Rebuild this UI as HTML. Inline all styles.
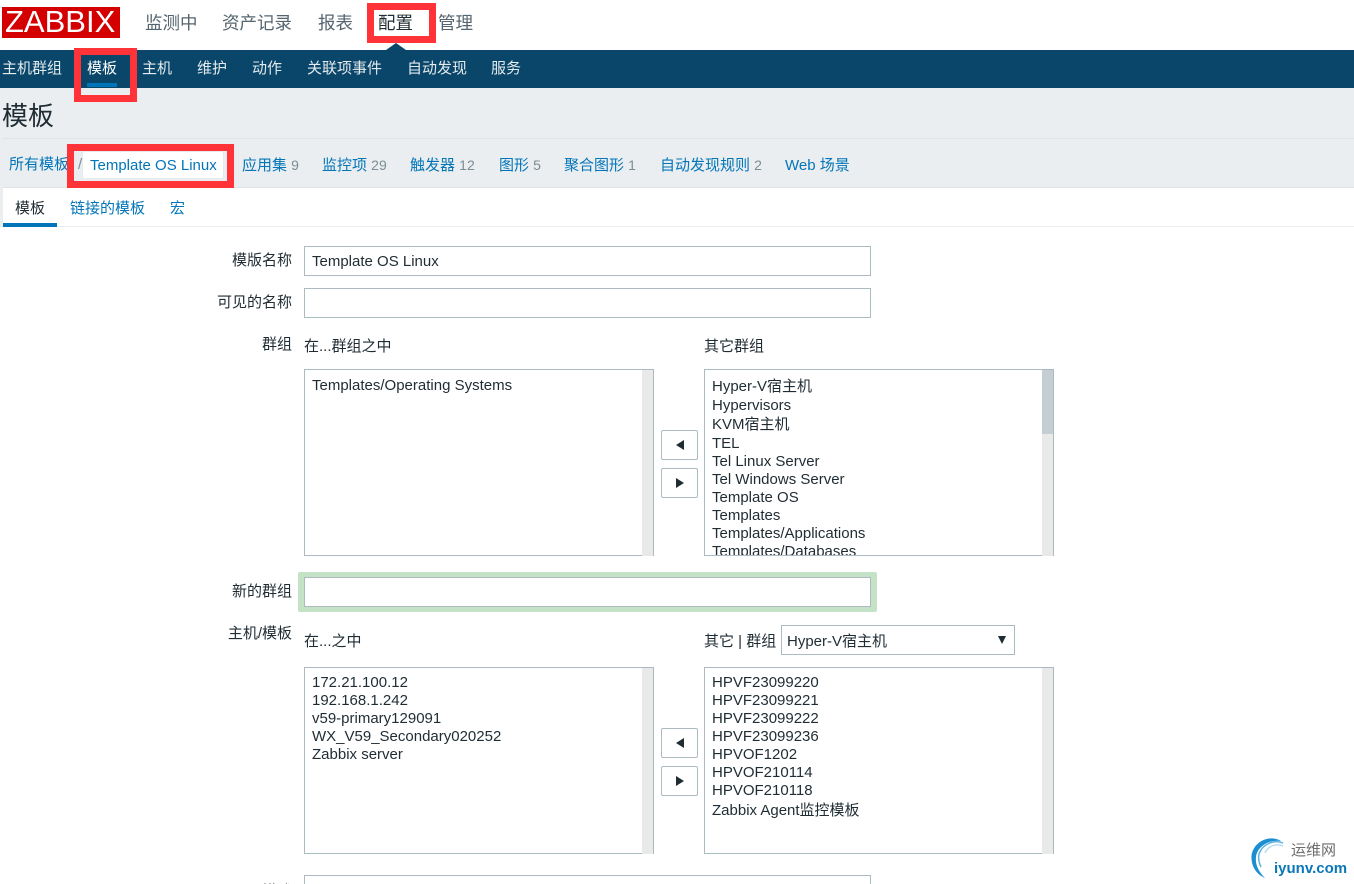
<!DOCTYPE html>
<html lang="zh"><head><meta charset="utf-8"><title>模板</title>
<style>
html,body{margin:0;padding:0;background:#fff}
#p{position:relative;width:1354px;height:884px;overflow:hidden;background:#fff;font:15px/20px "Liberation Sans","Noto Sans CJK SC",sans-serif;color:#1f2c33}
#p div{position:absolute;box-sizing:border-box}
.t{position:absolute;white-space:nowrap;line-height:20px}
.n{color:#e3ebef}.b{color:#0275b8}.g{color:#7c8d96}.r{text-align:right;width:120px;left:172px}
.inp{border:1px solid #acbbc2;background:#fff;left:304px;width:567px;height:30px}
.list{border:1px solid #acbbc2;background:#fff;width:350px;height:187px;overflow:hidden}
#p .sbw{width:350px;height:187px;overflow:visible}
.sb{top:1px;left:338px;width:11px;height:186px;background:#e9e9e9}
.btn{left:661px;width:37px;height:30px;border:1px solid #acbbc2;border-radius:2px;background:#fff}
.red{border:7px solid #ff3338}
</style></head><body><div id="p">
<div style="left:2px;top:7px;width:118px;height:31px;background:#d40000"></div>
<span class="t" style="left:5px;top:6px;line-height:32px;font-size:31px;color:#fff">ZABBIX</span>
<span class="t" style="left:145px;top:13px;font-size:17.5px;color:#55656f">监测中</span>
<span class="t" style="left:222px;top:13px;font-size:17.5px;color:#55656f">资产记录</span>
<span class="t" style="left:318px;top:13px;font-size:17.5px;color:#55656f">报表</span>
<span class="t" style="left:378px;top:13px;font-size:17.5px;color:#1f2c33">配置</span>
<span class="t" style="left:438px;top:13px;font-size:17.5px;color:#55656f">管理</span>
<div style="left:0;top:50px;width:1354px;height:38px;background:#0a466a"></div>
<div style="left:386px;top:43px;width:0;height:0;border-left:10px solid transparent;border-right:10px solid transparent;border-bottom:7px solid #0a466a"></div>
<span class="t n" style="left:2px;top:59px">主机群组</span>
<span class="t" style="left:87px;top:59px;color:#fff">模板</span>
<div style="left:87px;top:83px;width:30px;height:4px;background:#0275b8"></div>
<span class="t n" style="left:142px;top:59px">主机</span>
<span class="t n" style="left:197px;top:59px">维护</span>
<span class="t n" style="left:252px;top:59px">动作</span>
<span class="t n" style="left:307px;top:59px">关联项事件</span>
<span class="t n" style="left:407px;top:59px">自动发现</span>
<span class="t n" style="left:491px;top:59px">服务</span>
<div style="left:0;top:88px;width:1354px;height:99px;background:#ebeef0"></div>
<div style="left:0;top:187px;width:3px;height:40px;background:#ebeef0"></div>
<div style="left:2px;top:138px;width:1352px;height:1px;background:#dfe4e7"></div>
<span class="t" style="left:2px;top:106px;font-size:26px;color:#1f2c33">模板</span>
<span class="t b" style="left:9px;top:155px">所有模板</span>
<span class="t g" style="left:78px;top:155px">/</span>
<div style="left:83px;top:152px;width:140px;height:26px;background:#fff;border-radius:2px;box-shadow:0 0 1px #ccd5d9"></div>
<span class="t b" style="left:90px;top:156px">Template OS Linux</span>
<span class="t b" style="left:242px;top:155px">应用集 <span class="g" style="font-size:14px">9</span></span>
<span class="t b" style="left:322px;top:155px">监控项 <span class="g" style="font-size:14px">29</span></span>
<span class="t b" style="left:410px;top:155px">触发器 <span class="g" style="font-size:14px">12</span></span>
<span class="t b" style="left:499px;top:155px">图形 <span class="g" style="font-size:14px">5</span></span>
<span class="t b" style="left:564px;top:155px">聚合图形 <span class="g" style="font-size:14px">1</span></span>
<span class="t b" style="left:660px;top:155px">自动发现规则 <span class="g" style="font-size:14px">2</span></span>
<span class="t b" style="left:785px;top:156px">Web 场景</span>
<div style="left:3px;top:187px;width:1351px;height:1px;background:#dfe4e7"></div>
<div style="left:3px;top:226px;width:1351px;height:1px;background:#ebeef0"></div>
<div style="left:3px;top:223px;width:54px;height:4px;background:#0275b8"></div>
<span class="t" style="left:15px;top:199px">模板</span>
<span class="t b" style="left:70px;top:199px">链接的模板</span>
<span class="t b" style="left:170px;top:199px">宏</span>
<span class="t r" style="top:251px">模版名称</span>
<div class="inp" style="top:246px"></div>
<span class="t" style="left:312px;top:252px">Template OS Linux</span>
<span class="t r" style="top:293px">可见的名称</span>
<div class="inp" style="top:288px"></div>
<span class="t r" style="top:335px">群组</span>
<span class="t" style="left:304px;top:337px">在...群组之中</span>
<span class="t" style="left:704px;top:337px">其它群组</span>
<div class="list" style="left:304px;top:369px"></div>
<div class="sb" style="left:642px;top:370px"></div>
<span class="t" style="left:312px;top:376px">Templates/Operating Systems</span>
<div class="list" style="left:704px;top:369px">
<span class="t" style="left:7px;top:7px">Hyper-V宿主机</span>
<span class="t" style="left:7px;top:26px">Hypervisors</span>
<span class="t" style="left:7px;top:45px">KVM宿主机</span>
<span class="t" style="left:7px;top:64px">TEL</span>
<span class="t" style="left:7px;top:82px">Tel Linux Server</span>
<span class="t" style="left:7px;top:100px">Tel Windows Server</span>
<span class="t" style="left:7px;top:118px">Template OS</span>
<span class="t" style="left:7px;top:136px">Templates</span>
<span class="t" style="left:7px;top:154px">Templates/Applications</span>
<span class="t" style="left:7px;top:172px">Templates/Databases</span>
</div>
<div class="sb" style="left:1042px;top:370px"></div>
<div style="left:1042px;top:370px;width:11px;height:64px;background:#c5ced4"></div>
<div class="btn" style="top:430px"><div style="left:14px;top:9px;width:0;height:0;border-top:5px solid transparent;border-bottom:5px solid transparent;border-right:8px solid #1f2c33"></div></div>
<div class="btn" style="top:468px"><div style="left:14px;top:9px;width:0;height:0;border-top:5px solid transparent;border-bottom:5px solid transparent;border-left:8px solid #1f2c33"></div></div>
<span class="t r" style="top:582px">新的群组</span>
<div style="left:298px;top:572px;width:579px;height:40px;background:#c4e2c6;border-radius:2px"></div>
<div class="inp" style="top:577px"></div>
<span class="t r" style="top:624px">主机/模板</span>
<span class="t" style="left:304px;top:632px">在...之中</span>
<span class="t" style="left:704px;top:632px">其它 | 群组</span>
<div style="left:781px;top:625px;width:234px;height:30px;border:1px solid #acbbc2;background:#fff"></div>
<span class="t" style="left:787px;top:632px">Hyper-V宿主机</span>
<div style="left:998px;top:636px;width:0;height:0;border-left:4.5px solid transparent;border-right:4.5px solid transparent;border-top:8px solid #1f2c33"></div>
<div class="list" style="left:304px;top:667px">
<span class="t" style="left:7px;top:5px">172.21.100.12</span>
<span class="t" style="left:7px;top:23px">192.168.1.242</span>
<span class="t" style="left:7px;top:41px">v59-primary129091</span>
<span class="t" style="left:7px;top:59px">WX_V59_Secondary020252</span>
<span class="t" style="left:7px;top:77px">Zabbix server</span>
</div>
<div class="sb" style="left:642px;top:668px"></div>
<div class="list" style="left:704px;top:667px">
<span class="t" style="left:7px;top:5px">HPVF23099220</span>
<span class="t" style="left:7px;top:23px">HPVF23099221</span>
<span class="t" style="left:7px;top:41px">HPVF23099222</span>
<span class="t" style="left:7px;top:59px">HPVF23099236</span>
<span class="t" style="left:7px;top:77px">HPVOF1202</span>
<span class="t" style="left:7px;top:95px">HPVOF210114</span>
<span class="t" style="left:7px;top:113px">HPVOF210118</span>
<span class="t" style="left:7px;top:133px">Zabbix Agent监控模板</span>
</div>
<div class="sb" style="left:1042px;top:668px"></div>
<div class="btn" style="top:728px"><div style="left:14px;top:9px;width:0;height:0;border-top:5px solid transparent;border-bottom:5px solid transparent;border-right:8px solid #1f2c33"></div></div>
<div class="btn" style="top:766px"><div style="left:14px;top:9px;width:0;height:0;border-top:5px solid transparent;border-bottom:5px solid transparent;border-left:8px solid #1f2c33"></div></div>
<span class="t r" style="top:882px">描述</span>
<div class="inp" style="top:875px;height:40px"></div>
<div class="red" style="left:367px;top:3px;width:69px;height:40px"></div>
<div class="red" style="left:74px;top:48px;width:63px;height:54px"></div>
<div class="red" style="left:67px;top:144px;width:167px;height:44px"></div>
<svg style="position:absolute;left:1245px;top:832px" width="50" height="50" viewBox="0 0 50 50" fill="none">
<path d="M36 9C24 2 8 10 6.500 24C6 34 11 42 20 46C14 40 10 33 11 25C12 15 24 7 36 9Z" fill="#1c8fd0"/>
<path d="M38 11C28 7 17 13 14 22c-1 5 0 9 2 13" stroke="#5cb4e2" stroke-width="1.500"/>
<path d="M38 14c-7-3-15 0-18 7" stroke="#a5d5ee" stroke-width="1.200"/>
</svg>
<span class="t" style="left:1291px;top:841px;font-size:15px;color:#6d6d6d">运维网</span>
<span class="t" style="left:1274px;top:859px;font-size:15px;font-weight:bold;color:#0a77b8">iyunv.com</span>
</div></body></html>
